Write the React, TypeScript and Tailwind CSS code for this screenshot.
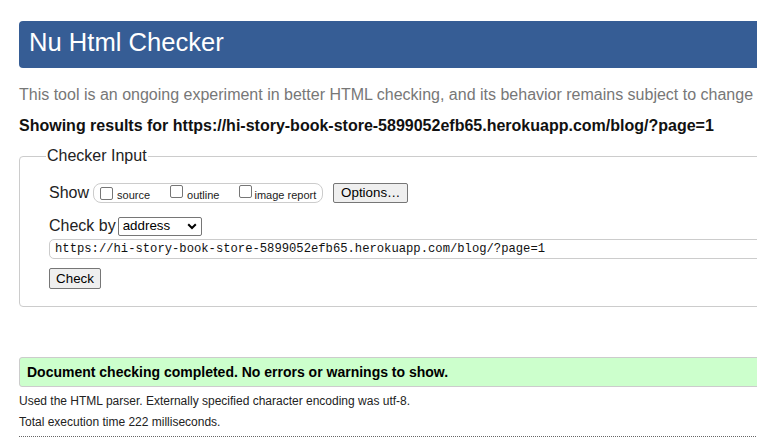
export default function App() {
  const Box = () => (
    <span className="inline-block w-[13px] h-[13px] border border-[#767676] rounded-[2px] bg-white shrink-0" />
  );
  return (
    <div className="w-[757px] h-[438px] overflow-hidden bg-white">
      <div className="w-[1000px] pl-[19px] pt-[21px] font-['Liberation_Sans',Arial,sans-serif] text-black">
        <div className="h-[47px] bg-[#365d95] rounded-[4px] text-white text-[25.6px] pl-[10px] flex items-center pb-[3px] leading-none">
          Nu Html Checker
        </div>
        <p className="mt-[18px] text-[16px] leading-[18px] text-[#777777]">
          This tool is an ongoing experiment in better HTML checking, and its behavior remains subject to change
        </p>
        <p className="mt-[13px] text-[16px] leading-[18px] font-bold text-[#111]">
          Showing results for https://hi-story-book-store-5899052efb65.herokuapp.com/blog/?page=1
        </p>
        <fieldset className="mt-[12px] border border-[#cccccc] rounded-[4px] pl-[29px] pb-[17px] pt-[18px]">
          <legend className="ml-[-3px] px-[1px] text-[16px] leading-[18px] text-[#222]">Checker Input</legend>
          <div className="flex items-center h-[20px]">
            <span className="text-[16px] leading-[18px] text-[#222]">Show</span>
            <div className="ml-[4px] h-[20px] border border-[#cccccc] rounded-[8px] flex items-center pl-[6px] pr-[6px]">
              <Box />
              <span className="ml-[4px] text-[11px] leading-[12px] pt-[3px] text-[#222]">source</span>
              <span className="ml-[20px]"><Box /></span>
              <span className="ml-[4px] text-[11px] leading-[12px] pt-[3px] text-[#222]">outline</span>
              <span className="ml-[20px]"><Box /></span>
              <span className="ml-[2px] text-[11px] leading-[12px] pt-[3px] text-[#222]">image report</span>
            </div>
            <div className="ml-[10px] w-[75px] h-[20px] border border-[#767676] rounded-[2px] bg-[#efefef] flex items-center justify-center text-[13.33px] leading-none text-black">
              Options…
            </div>
          </div>
          <div className="mt-[13px] flex items-center h-[20px]">
            <span className="text-[16px] leading-[18px] text-[#222]">Check by</span>
            <div className="ml-[2px] w-[84px] h-[19px] border border-[#767676] rounded-[2px] bg-white flex items-center pl-[4px] pr-[4px] text-[13.33px] leading-none text-black">
              <span className="flex-1">address</span>
              <svg width="10" height="7" viewBox="0 0 10 7">
                <path d="M1.2 1.2 L5 5 L8.8 1.2" fill="none" stroke="#000" strokeWidth="2" />
              </svg>
            </div>
          </div>
          <div className="mt-[3px] h-[20px] border border-[#cccccc] rounded-[5px] flex items-center pl-[5px] font-['Liberation_Mono','DejaVu_Sans_Mono',monospace] text-[12.2px] leading-none text-[#111]">
            https://hi-story-book-store-5899052efb65.herokuapp.com/blog/?page=1
          </div>
          <div className="mt-[9px] w-[52px] h-[21px] border border-[#767676] rounded-[2px] bg-[#efefef] flex items-center justify-center text-[13.33px] leading-none text-black">
            Check
          </div>
        </fieldset>
        <div className="mt-[50px] h-[30px] bg-[#ccffcc] border border-[#cccccc] rounded-[3px] flex items-center pl-[7px] text-[14px] font-bold text-black leading-none">
          Document checking completed. No errors or warnings to show.
        </div>
        <p className="mt-[7px] text-[12px] leading-[14px] text-[#222]">
          Used the HTML parser. Externally specified character encoding was utf-8.
        </p>
        <p className="mt-[7px] text-[12px] leading-[14px] text-[#222]">
          Total execution time 222 milliseconds.
        </p>
        <div className="mt-[7px] border-t border-dotted border-[#666666]" />
      </div>
    </div>
  );
}
